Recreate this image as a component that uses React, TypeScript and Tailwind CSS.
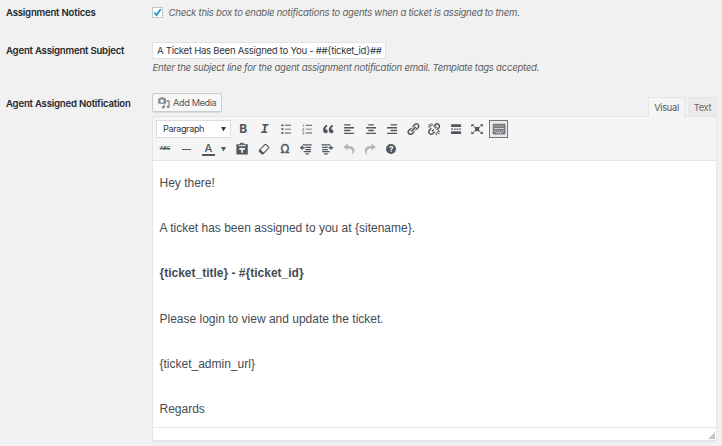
import React from 'react';

const Icon = ({ children, className = '' }: { children: React.ReactNode; className?: string }) => (
  <svg viewBox="0 0 20 20" className={`block h-[14.2px] w-[14.2px] shrink-0 ${className}`} fill="currentColor">
    {children}
  </svg>
);

const Slot = ({ children }: { children: React.ReactNode }) => (
  <span className="flex h-5 w-[21.25px] shrink-0 items-center justify-center">{children}</span>
);

const Bulleted = () => (
  <Icon>
    <circle cx="4.7" cy="4.6" r="1.6" /><circle cx="4.7" cy="10" r="1.6" /><circle cx="4.7" cy="15.4" r="1.6" />
    <path d="M8 4h9v1.3H8zM8 9.4h9v1.3H8zM8 14.8h9v1.3H8z" />
  </Icon>
);

const Numbered = () => (
  <Icon>
    <path opacity=".6" d="M4 3h1.2v4H4zM3.2 8.4h2.6v2.2l-1.4 1h1.4v.8H3.2v-1.3l1.5-1.2V9.2H3.2zM3.2 13.5h2.6v4H3.2v-.8h1.5v-.8H3.4v-.8h1.3v-.8H3.2z" />
    <path d="M8 4h9v1.3H8zM8 9.4h9v1.3H8zM8 14.8h9v1.3H8z" />
  </Icon>
);

const Quote = () => (
  <Icon>
    <path d="M9.49 13.22c0-.74-.2-1.38-.61-1.9-.62-.78-1.83-.88-2.53-.72-.29-1.65 1.11-3.75 2.92-4.65L7.88 4c-2.73 1.3-5.42 4.28-4.96 8.05C3.21 14.43 4.59 16 6.54 16c.85 0 1.56-.25 2.12-.75s.83-1.18.83-2.03zm8.05 0c0-.74-.2-1.38-.61-1.9-.63-.78-1.83-.88-2.53-.72-.29-1.65 1.11-3.75 2.92-4.65L15.93 4c-2.73 1.3-5.41 4.28-4.95 8.05.29 2.38 1.66 3.95 3.61 3.95.85 0 1.56-.25 2.12-.75s.83-1.18.83-2.03z" />
  </Icon>
);

const AlignLeft = () => <Icon><path d="M12 5V3H3v2h9zm5 4V7H3v2h14zm-5 4v-2H3v2h9zm5 4v-2H3v2h14z" /></Icon>;
const AlignCenter = () => <Icon><path d="M14 5V3H6v2h8zm3 4V7H3v2h14zm-3 4v-2H6v2h8zm3 4v-2H3v2h14z" /></Icon>;
const AlignRight = () => <Icon><path d="M17 5V3H8v2h9zm0 4V7H3v2h14zm0 4v-2H8v2h9zm0 4v-2H3v2h14z" /></Icon>;

const LinkIcon = () => (
  <Icon>
    <path d="M17.74 2.76c1.68 1.69 1.68 4.41 0 6.1l-1.53 1.52c-1.12 1.12-2.7 1.47-4.14 1.09l2.62-2.61.76-.77.76-.76c.84-.84.84-2.2 0-3.04-.84-.85-2.2-.85-3.04 0l-.77.76-3.38 3.38c-.37-1.44-.02-3.02 1.1-4.14l1.52-1.53c1.69-1.68 4.42-1.68 6.1 0zM8.59 13.43l5.34-5.34c.42-.42.42-1.1 0-1.52-.44-.43-1.13-.39-1.53 0l-5.33 5.34c-.42.42-.42 1.1 0 1.52.44.43 1.13.39 1.52 0zm-.76 2.29l4.14-4.15c.38 1.44.03 3.02-1.09 4.14l-1.52 1.53c-1.69 1.68-4.41 1.68-6.1 0-1.68-1.68-1.68-4.42 0-6.1l1.53-1.52c1.12-1.12 2.7-1.47 4.14-1.1l-4.14 4.15c-.85.84-.85 2.2 0 3.05.84.84 2.2.84 3.04 0z" />
  </Icon>
);

const Unlink = () => (
  <Icon>
    <g fill="none" stroke="currentColor" strokeWidth="2.1">
      <path d="M9.2 6.4l2.6-2.7c1.3-1.3 3.4-1.3 4.700 0s1.300 3.400 0 4.700L13.800 11.200M10.800 13.600l-2.500 2.500c-1.300 1.300-3.400 1.300-4.700 0s-1.300-3.400 0-4.700L6.200 8.800" />
      <path d="M7 13l2.500-2.500M11 9l2.500-2.500" />
      <path strokeWidth="1.500" d="M2.500 3l3.500 3M6.500 1.500l1 3.500M1.500 6.500l3.300 1M17.500 17l-3.500-3M13.500 18.500l-1-3.500M18.500 13.500l-3.300-1" />
    </g>
  </Icon>
);

const More = () => (
  <Icon><path d="M3 3h14v4H3zM3 9.100h2.600v1.800H3zm3.800 0h2.600v1.800H6.800zm3.800 0h2.600v1.800h-2.600zm3.800 0H17v1.800h-2.600zM3 13h14v4H3z" /></Icon>
);

const Fullscreen = () => (
  <Icon>
    <path d="M7 7h6v6H7z" />
    <path d="M1.800 3H6L1.800 7zM18.200 3H14l4.200 4zM1.800 17H6l-4.200-4zM18.200 17H14l4.200-4z" />
    <path fill="none" stroke="currentColor" strokeWidth="1.300" d="M3 4l14 12M17 4L3 16" />
  </Icon>
);

const Keyboard = () => (
  <Icon className="text-[#72777c]">
    <path fillRule="evenodd" d="M2 2.500h16a1 1 0 011 1v13a1 1 0 01-1 1H2a1 1 0 01-1-1v-13a1 1 0 011-1zm1 2.300v1.500h1.500V4.800zm3 0v1.500h1.500V4.800zm3 0v1.500h1.500V4.800zm3 0v1.500h1.500V4.800zm3 0v1.500h1.500V4.800zM3 8.300v1.100h14V8.300zM3 12v1.500h2V12zm3.500 0v1.500H8V12zm3 0v1.500H11V12zm3 0v1.500H14V12zm3 0v1.500H17V12zM5 14.700v1h10v-1z" />
  </Icon>
);

const Paste = () => (
  <Icon>
    <path fillRule="evenodd" d="M7 3V2a1 1 0 011-1h4a1 1 0 011 1v1h5v14.500H2V3zm1.500 0h3V2.300h-3zM5 4.500V6h10V4.500zM6 8.500v2.300h2.800V15h2.400v-4.200H14V8.500z" />
  </Icon>
);

const Eraser = () => (
  <Icon>
    <path fill="none" stroke="currentColor" strokeWidth="1.500" strokeLinejoin="round" d="M4 11L11 3.700q.8-.8 1.800 0l3.400 3q.8.900 0 1.800L9.200 16z" />
    <path d="M3.600 10.700l6 5.300-1.200 1.200q-.9.800-1.900 0l-3.700-3.300q-.8-.9 0-1.900z" />
  </Icon>
);

const Outdent = () => (
  <Icon><path d="M5.500 3H18v2H5.500zM9 6.600h8v1.800H9zM9 9.700h8v1.800H9zM6.500 12.800H17v1.800H6.500zM9 15.900h5v1.600H9zM1 8l4.500-3.500V7H8v2.200H5.500v2.300z" /></Icon>
);
const Indent = () => (
  <Icon><path d="M2 3h12.500v2H2zM3 6.600h8v1.800H3zM3 9.700h8v1.800H3zM3 12.800h10.500v1.800H3zM6 15.900h5v1.600H6zM19 8l-4.500-3.500V7H12v2.200h2.500v2.300z" /></Icon>
);

const Undo = () => (
  <Icon className="text-[#b2b5b8]"><path d="M8 2L2 7l6 5V8.700c4.500 0 6.800 2 6.800 5.300 0 1.300-.4 2.700-1.300 4 2.400-1.400 4-3.500 4-6.100 0-3.900-3.500-6.400-9.500-6.600z" /></Icon>
);
const Redo = () => (
  <Icon className="text-[#b2b5b8]"><path d="M12 2l6 5-6 5V8.700c-4.500 0-6.800 2-6.800 5.300 0 1.300.4 2.700 1.300 4-2.400-1.400-4-3.500-4-6.100 0-3.900 3.500-6.400 9.500-6.600z" /></Icon>
);

const Caret = () => (
  <svg viewBox="0 0 5 5" className="block h-[5px] w-[5px] shrink-0" fill="currentColor"><path d="M0 0h5L2.500 4.500z" /></svg>
);

const MediaIcon = () => (
  <svg viewBox="0 0 12 12" className="block h-3 w-3 shrink-0 text-[#82878c]" fill="currentColor">
    <path fillRule="evenodd" d="M1 1.200h1L2.500.3h3l.5.900h1.200q.8 0 .8.800V6q0 .8-.8.800H1Q.2 6.800.2 6V2q0-.8.8-.8zM4 2.200a1.800 1.800 0 100 3.600 1.800 1.800 0 000-3.600z" />
    <path d="M8.700 3.300h2.900v6.500a1.500 1.300 0 11-1.200-1.300V5H8.700zM6.800 7.500v2.600A1.500 1.300 0 115.600 9V7.500z" />
  </svg>
);

const messages = [
  { text: 'Hey there!', bold: false },
  { text: 'A ticket has been assigned to you at {sitename}.', bold: false },
  { text: '{ticket_title} - #{ticket_id}', bold: true },
  { text: 'Please login to view and update the ticket.', bold: false },
  { text: '{ticket_admin_url}', bold: false },
  { text: 'Regards', bold: false },
];

const Label = ({ children }: { children: React.ReactNode }) => (
  <div className="w-[146px] shrink-0 pt-px text-[9.600px] font-semibold leading-[14px] tracking-[-0.210px] text-[#23282d]">{children}</div>
);

export default function App() {
  return (
    <main className="flex h-[446px] w-[722px] flex-col overflow-hidden whitespace-nowrap bg-[#f1f1f1] pl-[6px] pt-[5px] font-['Inter',sans-serif] text-[#444]">
      <section className="flex h-[37px] shrink-0">
        <Label>Assignment Notices</Label>
        <div className="flex h-[14px] items-center">
          <span className="flex h-[11px] w-[11px] items-center justify-center border border-[#c3c5c7] bg-white">
            <svg viewBox="0 0 9 9" className="h-[9px] w-[9px]" fill="none" stroke="#1e8cbe" strokeWidth="1.700"><path d="M1.300 4.500l2.200 2.600L7.700 1.300" /></svg>
          </span>
          <span className="ml-[5.500px] pt-[2px] text-[9.600px] italic tracking-[-0.270px] text-[#606060]">Check this box to enable notifications to agents when a ticket is assigned to them.</span>
        </div>
      </section>

      <section className="flex h-[52px] shrink-0">
        <div className="pt-[1px]"><Label>Agent Assignment Subject</Label></div>
        <div>
          <div className="flex h-[17px] w-[234px] items-center border border-[#e2e2e2] bg-white pl-[4px] pt-px text-[9.600px] tracking-[-0.290px] text-[#32373c]">A Ticket Has Been Assigned to You - ##{'{ticket_id}'}##</div>
          <p className="mt-[2px] pl-[0.500px] text-[9.600px] italic leading-[14px] tracking-[-0.265px] text-[#606060]">Enter the subject line for the agent assignment notification email. Template tags accepted.</p>
        </div>
      </section>

      <section className="flex shrink-0">
        <div className="pt-[2px]"><Label>Agent Assigned Notification</Label></div>
        <div className="w-[565px]">
          <div className="flex h-[22px] justify-between">
            <button className="-mt-px flex h-[19px] w-[70px] items-center gap-[3px] rounded-[2px] border border-[#ccc] bg-[#f7f7f7] pl-[5px] text-[9.100px] tracking-[-0.330px] text-[#555] shadow-[0_1px_0_#ddd]">
              <MediaIcon />Add Media
            </button>
            <div className="mt-[3px] flex gap-[3px] text-[9.200px] tracking-[-0.250px] text-[#555]">
              <div className="relative z-10 flex h-[20px] w-[37px] items-center justify-center border border-b-0 border-[#e5e5e5] bg-[#f5f5f5]">Visual</div>
              <div className="flex h-[19px] w-[29px] items-center justify-center border border-b-0 border-[#e5e5e5] bg-[#ebebeb] pt-px text-[#666]">Text</div>
            </div>
          </div>

          <div className="h-[325px] border border-[#e5e5e5] bg-white shadow-[0_1px_1px_rgba(0,0,0,0.04)]">
            <div className="h-[44px] border-b border-[#e5e5e5] bg-[#f5f5f5] pl-[3px] pt-[2px] text-[#50575e]">
              <div className="flex h-[20px] items-center">
                <div className="mr-[1.700px] flex h-[18px] w-[75px] shrink-0 items-center justify-between border border-[#ddd] bg-white pl-[6px] pr-[4px] text-[9.100px] tracking-[-0.380px] text-[#32373c]">Paragraph<Caret /></div>
                <Slot><b className="text-[12px] leading-none">B</b></Slot>
                <Slot><span className="pt-px font-['Liberation_Mono',monospace] text-[13.500px] font-bold italic leading-none">I</span></Slot>
                <Slot><Bulleted /></Slot>
                <Slot><Numbered /></Slot>
                <Slot><Quote /></Slot>
                <Slot><AlignLeft /></Slot>
                <Slot><AlignCenter /></Slot>
                <Slot><AlignRight /></Slot>
                <Slot><LinkIcon /></Slot>
                <Slot><Unlink /></Slot>
                <Slot><More /></Slot>
                <Slot><Fullscreen /></Slot>
                <Slot><span className="ml-px flex h-[18px] w-[19px] shrink-0 items-center justify-center border border-[#72777c] bg-[#ebebeb]"><Keyboard /></span></Slot>
              </div>
              <div className="-ml-[0.700px] flex h-[20px] items-center">
                <Slot><span className="-ml-[2px] text-[5.200px] font-semibold leading-none tracking-[-0.200px] line-through decoration-[0.500px]">ABC</span></Slot>
                <Slot><span className="-ml-px h-px w-[9px] bg-[#50575e]" /></Slot>
                <Slot><span className="flex h-[13px] w-[13px] items-center justify-center border-b-2 border-[#50575e] text-[11px] font-medium leading-none">A</span></Slot>
                <span className="mr-[3.800px] flex w-[9px] justify-center"><Caret /></span>
                <Slot><Paste /></Slot>
                <Slot><Eraser /></Slot>
                <Slot><span className="pt-px font-['DejaVu_Sans',sans-serif] text-[11.500px] font-normal leading-none [-webkit-text-stroke:0.4px]">Ω</span></Slot>
                <Slot><Outdent /></Slot>
                <Slot><Indent /></Slot>
                <Slot><Undo /></Slot>
                <Slot><Redo /></Slot>
                <Slot><span className="flex h-[10px] w-[10px] items-center justify-center rounded-full bg-[#50575e] text-[8px] font-bold leading-none text-white">?</span></Slot>
              </div>
            </div>
            <div className="h-[267px] border-b border-[#e9e9e9] pl-[6.500px] pt-[12px] font-['Liberation_Sans',Arial,sans-serif] text-[12px] text-[#444b52]">
              {messages.map((m) => (
                <p key={m.text} className={`h-[45.200px] leading-[20px] ${m.bold ? 'font-bold' : ''}`}>{m.text}</p>
              ))}
            </div>
            <div className="flex h-[12px] items-end justify-end pb-[1px] pr-[1px]">
              <svg viewBox="0 0 7 7" className="h-[7px] w-[7px]"><path d="M7 0v7H0z" fill="#c4c4c4" /></svg>
            </div>
          </div>
        </div>
      </section>
    </main>
  );
}
